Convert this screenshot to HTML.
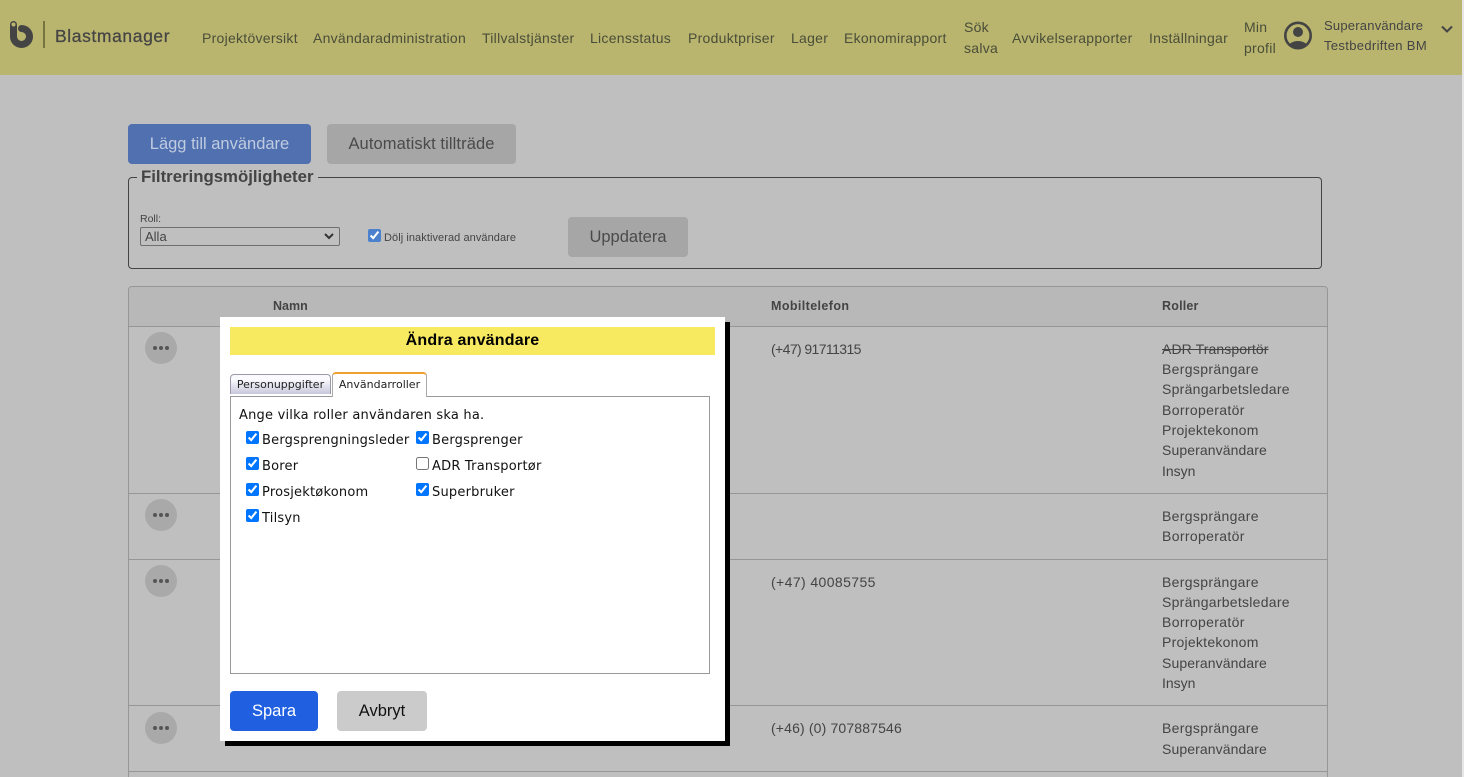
<!DOCTYPE html>
<html><head><meta charset="utf-8"><title>Blastmanager</title>
<style>
*{box-sizing:border-box}
html,body{margin:0;padding:0;width:1464px;height:777px;overflow:hidden}
body{background:#bfbfbf;position:relative;font-family:"Liberation Sans",sans-serif;color:#444}
#w{position:absolute;left:0;top:0;width:1464px;height:777px;overflow:hidden}
.a{position:absolute;white-space:nowrap}
.n{font-size:14px;line-height:20px;color:#4a4d38;letter-spacing:.27px}
.t{font-size:14px;line-height:20px;color:#444;letter-spacing:.1px}
.h{font-size:12.5px;font-weight:bold;line-height:16px;color:#444}
.btn{position:absolute;border-radius:4px;text-align:center;font-size:16.5px;line-height:40px;height:40px}
.dot{position:absolute;width:32px;height:32px;left:145px;border-radius:50%;background:#a9a9a9;display:flex;align-items:center;justify-content:center;gap:2px}
.dot i{width:4px;height:4px;border-radius:50%;background:#555}
.line{position:absolute;left:128px;width:1200px;height:1px;background:#969696}
input[type=checkbox]{position:absolute;margin:0;width:13px;height:13px}
.lbl{position:absolute;font-family:"DejaVu Sans",sans-serif;font-size:13px;line-height:16px;color:#111;white-space:nowrap;letter-spacing:.21px}
.b{letter-spacing:.33px}.s{letter-spacing:.27px}.o{letter-spacing:.35px}.p{letter-spacing:.25px}.i{letter-spacing:0}
</style></head><body><div id="w">
<div class="a" style="left:0;top:0;width:1464px;height:75px;background:#b9b56f"></div>
<svg class="a" style="left:9px;top:20px" width="26" height="29" viewBox="0 0 26 29"><path d="M4.5 4.5 V16.5 A8 8 0 1 0 12.5 8.5" fill="none" stroke="#444" stroke-width="7" stroke-linecap="round"/><circle cx="4.5" cy="4.5" r="2" fill="#b9b56f"/></svg>
<div class="a" style="left:43px;top:21px;width:2px;height:27px;background:#77753f"></div>
<div class="a" style="left:55px;top:25px;font-size:17.5px;line-height:22px;color:#444;letter-spacing:.6px;-webkit-text-stroke:.25px #444">Blastmanager</div>
<div class="a n" style="left:202px;top:28px">Projektöversikt</div>
<div class="a n" style="left:313px;top:28px">Användaradministration</div>
<div class="a n" style="left:482px;top:28px">Tillvalstjänster</div>
<div class="a n" style="left:590px;top:28px">Licensstatus</div>
<div class="a n" style="left:688px;top:28px">Produktpriser</div>
<div class="a n" style="left:791px;top:28px">Lager</div>
<div class="a n" style="left:844px;top:28px">Ekonomirapport</div>
<div class="a n" style="left:964px;top:17px">Sök</div>
<div class="a n" style="left:964px;top:38px">salva</div>
<div class="a n" style="left:1012px;top:28px">Avvikelserapporter</div>
<div class="a n" style="left:1149px;top:28px">Inställningar</div>
<div class="a n" style="left:1244px;top:17px">Min</div>
<div class="a n" style="left:1244px;top:38px">profil</div>
<svg class="a" style="left:1284px;top:21px" width="28" height="29" viewBox="0 0 28 29"><defs><clipPath id="c"><circle cx="14" cy="14.5" r="13"/></clipPath></defs><circle cx="14" cy="14.5" r="12.7" fill="none" stroke="#444" stroke-width="2.6"/><circle cx="14" cy="11" r="5" fill="#444"/><ellipse cx="14" cy="26" rx="9.5" ry="6" fill="#444" clip-path="url(#c)"/></svg>
<div class="a" style="left:1324px;top:16px;font-size:13px;line-height:20px;color:#444;letter-spacing:.22px">Superanvändare</div>
<div class="a" style="left:1324px;top:36px;font-size:13px;line-height:20px;color:#444;letter-spacing:.34px">Testbedriften BM</div>
<svg class="a" style="left:1441px;top:25px" width="12" height="9" viewBox="0 0 12 9"><path d="M1 1.5 L6 6.5 L11 1.5" fill="none" stroke="#444" stroke-width="2"/></svg>

<div class="btn" style="left:128px;top:124px;width:183px;background:#5170b0;color:#bfcbe0">Lägg till användare</div>
<div class="btn" style="left:327px;top:124px;width:189px;background:#a6a6a6;color:#4a4a4a;letter-spacing:.1px">Automatiskt tillträde</div>

<div class="a" style="left:128px;top:177px;width:1194px;height:92px;border:1px solid #444;border-radius:4px"></div>
<div class="a" style="left:137px;top:167px;padding:0 4px;background:#bfbfbf;font-size:16.8px;line-height:20px;font-weight:bold;color:#444">Filtreringsmöjligheter</div>
<div class="a" style="left:140px;top:213px;font-size:10.5px;line-height:13px;color:#444">Roll:</div>
<div class="a" style="left:140px;top:227px;width:200px;height:19px;border:1px solid #6f6f6f;border-radius:2px;font-size:13px;line-height:17px;padding-left:4px;color:#444">Alla
<svg style="position:absolute;right:5px;top:5px" width="10" height="7" viewBox="0 0 10 7"><path d="M1 1 L5 5 L9 1" fill="none" stroke="#333" stroke-width="2"/></svg></div>
<input type="checkbox" checked style="left:368px;top:229px;accent-color:#4a80cc">
<div class="a" style="left:384px;top:231px;font-size:11px;line-height:14px;color:#444;letter-spacing:.07px">Dölj inaktiverad användare</div>
<div class="btn" style="left:568px;top:217px;width:120px;background:#a6a6a6;color:#4a4a4a">Uppdatera</div>

<div class="a" style="left:128px;top:286px;width:1200px;height:520px;border:1px solid #969696;border-radius:4px"></div>
<div class="a" style="left:129px;top:287px;width:1198px;height:39px;background:#b8b8b8;border-radius:4px 4px 0 0"></div>
<div class="line" style="top:326px"></div>
<div class="line" style="top:493px"></div>
<div class="line" style="top:559px"></div>
<div class="line" style="top:705px"></div>
<div class="line" style="top:771px"></div>
<div class="a h" style="left:273px;top:298px">Namn</div>
<div class="a h" style="left:771px;top:298px;letter-spacing:.4px">Mobiltelefon</div>
<div class="a h" style="left:1162px;top:298px;letter-spacing:.2px">Roller</div>

<div class="dot" style="top:332px"><i></i><i></i><i></i></div>
<div class="dot" style="top:499px"><i></i><i></i><i></i></div>
<div class="dot" style="top:565px"><i></i><i></i><i></i></div>
<div class="dot" style="top:712px"><i></i><i></i><i></i></div>

<div class="a t" style="left:771px;top:339px;letter-spacing:-.6px">(+47) 91711315</div>
<div class="a t" style="left:771px;top:572px;letter-spacing:.4px">(+47) 40085755</div>
<div class="a t" style="left:771px;top:718px;letter-spacing:.15px">(+46) (0) 707887546</div>

<div class="a t" style="left:1162px;top:339px;text-decoration:line-through">ADR Transportör</div>
<div class="a t b" style="left:1162px;top:359px">Bergsprängare</div>
<div class="a t s" style="left:1162px;top:379px">Sprängarbetsledare</div>
<div class="a t o" style="left:1162px;top:400px">Borroperatör</div>
<div class="a t p" style="left:1162px;top:420px">Projektekonom</div>
<div class="a t" style="left:1162px;top:440px">Superanvändare</div>
<div class="a t i" style="left:1162px;top:461px">Insyn</div>
<div class="a t b" style="left:1162px;top:506px">Bergsprängare</div>
<div class="a t o" style="left:1162px;top:526px">Borroperatör</div>
<div class="a t b" style="left:1162px;top:572px">Bergsprängare</div>
<div class="a t s" style="left:1162px;top:592px">Sprängarbetsledare</div>
<div class="a t o" style="left:1162px;top:612px">Borroperatör</div>
<div class="a t p" style="left:1162px;top:632px">Projektekonom</div>
<div class="a t" style="left:1162px;top:653px">Superanvändare</div>
<div class="a t i" style="left:1162px;top:673px">Insyn</div>
<div class="a t b" style="left:1162px;top:718px">Bergsprängare</div>
<div class="a t" style="left:1162px;top:739px">Superanvändare</div>

<div class="a" style="left:220px;top:317px;width:505px;height:424px;background:#fff;box-shadow:5px 5px 0 #000"></div>
<div class="a" style="left:230px;top:327px;width:485px;height:28px;background:#f7ea60;text-align:center;font-size:16px;font-weight:bold;line-height:27px;color:#000;letter-spacing:.2px">Ändra användare</div>

<div class="a" style="left:230px;top:374px;width:101px;height:20px;border:1px solid #9a9aa8;border-bottom:none;border-radius:4px 4px 0 0;background:linear-gradient(#fbfbff 20%,#c8c8dc);font:11px/19px 'DejaVu Sans',sans-serif;text-align:center;color:#222">Personuppgifter</div>
<div class="a" style="left:332px;top:372px;width:95px;height:25px;border:1px solid #aaa;border-top:2px solid #f0a030;border-bottom:none;border-radius:4px 4px 0 0;background:#fff;font:11px/21px 'DejaVu Sans',sans-serif;text-align:center;color:#222;z-index:2">Användarroller</div>
<div class="a" style="left:230px;top:396px;width:480px;height:278px;border:1px solid #999;background:#fff"></div>
<div class="lbl" style="left:239px;top:408px">Ange vilka roller användaren ska ha.</div>

<input type="checkbox" checked style="left:246px;top:431px"><div class="lbl" style="left:262px;top:433px">Bergsprengningsleder</div>
<input type="checkbox" checked style="left:416px;top:431px"><div class="lbl" style="left:432px;top:433px">Bergsprenger</div>
<input type="checkbox" checked style="left:246px;top:457px"><div class="lbl" style="left:262px;top:459px">Borer</div>
<input type="checkbox" style="left:416px;top:457px"><div class="lbl" style="left:432px;top:459px">ADR Transportør</div>
<input type="checkbox" checked style="left:246px;top:483px"><div class="lbl" style="left:262px;top:485px">Prosjektøkonom</div>
<input type="checkbox" checked style="left:416px;top:483px"><div class="lbl" style="left:432px;top:485px">Superbruker</div>
<input type="checkbox" checked style="left:246px;top:509px"><div class="lbl" style="left:262px;top:511px">Tilsyn</div>

<div class="btn" style="left:230px;top:691px;width:88px;background:#2060e0;color:#fff">Spara</div>
<div class="btn" style="left:337px;top:691px;width:90px;background:#cbcbcb;color:#111">Avbryt</div>
<div class="a" style="left:1462px;top:0;width:2px;height:777px;background:#e6e6e6"></div>
</div></body></html>
